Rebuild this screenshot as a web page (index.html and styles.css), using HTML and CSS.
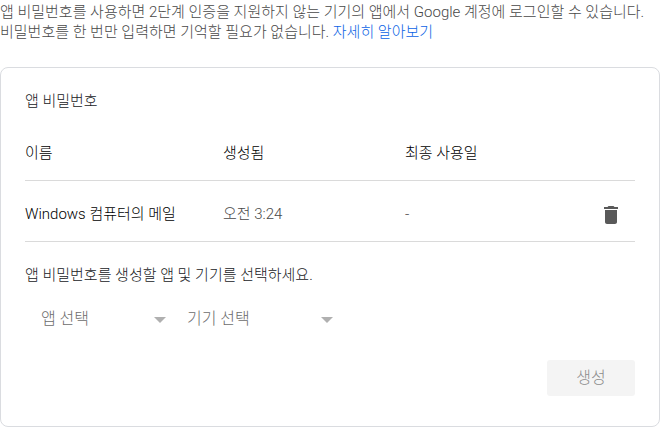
FILE: index.html
```html
<!DOCTYPE html>
<html lang="ko">
<head>
    <meta charset="UTF-8">
    <meta name="viewport" content="width=device-width, initial-scale=1.0">
    <title>앱 비밀번호</title>
    <link rel="stylesheet" href="styles.css">
</head>
<body>
    <p class="intro">앱 비밀번호를 사용하면 2단계 인증을 지원하지 않는 기기의 앱에서 Google 계정에 로그인할 수 있습니다. 비밀번호를 한 번만 입력하면 기억할 필요가 없습니다. <a href="#">자세히 알아보기</a></p>

    <main class="card">
        <h1>앱 비밀번호</h1>

        <table>
            <thead>
                <tr>
                    <th class="name">이름</th>
                    <th class="created">생성됨</th>
                    <th>최종 사용일</th>
                    <th class="actions"></th>
                </tr>
            </thead>
            <tbody>
                <tr>
                    <td class="app">Windows 컴퓨터의 메일</td>
                    <td>오전 3:24</td>
                    <td>-</td>
                    <td class="actions">
                        <button class="delete" type="button" aria-label="삭제">
                            <svg width="24" height="24" viewBox="0 0 24 24" fill="#595959">
                                <path d="M6 19c0 1.100.9 2 2 2h8c1.100 0 2-.9 2-2V7H6v12zM19 4h-3.500l-1-1h-5l-1 1H5v2h14V4z"/>
                            </svg>
                        </button>
                    </td>
                </tr>
            </tbody>
        </table>

        <form>
            <p class="hint">앱 비밀번호를 생성할 앱 및 기기를 선택하세요.</p>
            <div class="pickers">
                <div class="picker picker-app">
                    <select aria-label="앱 선택">
                        <option>앱 선택</option>
                    </select>
                </div>
                <div class="picker picker-device">
                    <select aria-label="기기 선택">
                        <option>기기 선택</option>
                    </select>
                </div>
            </div>
            <div class="form-actions">
                <button class="generate" type="button" disabled>생성</button>
            </div>
        </form>
    </main>
</body>
</html>
```
FILE: styles.css
```css
* {
    box-sizing: border-box;
}

body {
    margin: 0 1px 0 0;
    font-family: Roboto, "Noto Sans CJK KR", sans-serif;
    font-size: 15px;
    font-weight: 300;
    line-height: 20px;
    color: #484848;
    background-color: #fff;
    word-break: keep-all;
}

h1, p {
    margin: 0;
    font-size: 15px;
    font-weight: inherit;
}

a {
    color: #0b63e5;
    text-decoration: none;
}

.intro {
    padding: 2px 0 25px;
}

.card {
    padding: 23px 24px 30px;
    border: 1px solid #dadce0;
    border-radius: 8px;
}

.card h1, .hint {
    color: #202124;
}

table {
    width: 100%;
    margin-top: 13px;
    border-collapse: collapse;
    table-layout: fixed;
}

th, td {
    padding: 19px 0 17px;
    text-align: left;
    font-weight: inherit;
    border-bottom: 1px solid #dadada;
}

td {
    padding: 23px 0 17px;
}

th, .app {
    color: #000;
}

.name {
    width: 198px;
}

.created {
    width: 182px;
}

.actions {
    width: 36px;
}

td.actions {
    padding: 22px 0 14px;
}

button, select {
    font: inherit;
    font-size: 16px;
    border: none;
}

.delete {
    display: block;
    padding: 0;
    background: none;
    cursor: pointer;
}

.delete svg {
    display: block;
}

.hint {
    margin-top: 23px;
}

.pickers {
    display: flex;
    margin-top: 14px;
}

.picker {
    position: relative;
}

.picker-app {
    width: 146px;
}

.picker-device {
    width: 167px;
}

.picker select {
    width: 100%;
    height: 40px;
    padding: 0 24px 0 16px;
    color: #6c6c6c;
    background: none;
    appearance: none;
}

/* dropdown arrow */
.picker::after {
    content: "";
    position: absolute;
    top: 18px;
    right: 5px;
    border: 6px solid transparent;
    border-top-color: #b0b0b0;
    border-bottom: none;
    pointer-events: none;
}

.form-actions {
    display: flex;
    justify-content: flex-end;
    margin-top: 21px;
}

.generate {
    width: 88px;
    height: 36px;
    color: #8c8c8c;
    background-color: #f4f4f4;
    border-radius: 3px;
}
```
